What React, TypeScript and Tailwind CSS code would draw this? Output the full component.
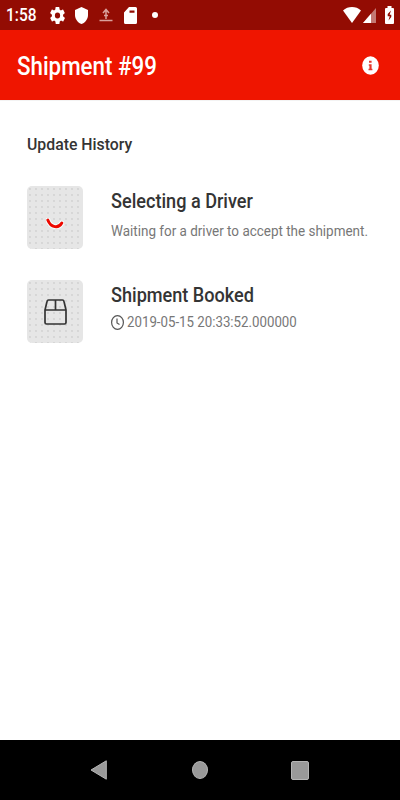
import type { ReactNode } from 'react'

interface HistoryEntry {
  title: string
  detail: string
  status: 'pending' | 'done'
}

const entries: HistoryEntry[] = [
  {
    title: 'Selecting a Driver',
    detail: 'Waiting for a driver to accept the shipment.',
    status: 'pending',
  },
  { title: 'Shipment Booked', detail: '2019-05-15 20:33:52.000000', status: 'done' },
]

function StatusBar() {
  return (
    <div className="flex h-[30px] items-center bg-[#930c03] pr-[6px] pl-[6px] text-white">
      <span className="w-[43px] text-[18px] leading-[30px] font-medium whitespace-nowrap">
        <span className="inline-block origin-left scale-x-[0.86]">1:58</span>
      </span>
      <svg className="ml-px h-[17px] w-[15px]" viewBox="2 2 20 20" preserveAspectRatio="none" fill="currentColor">
        <path d="M19.4 13a7.500 7.500 0 0 0 0-2l2.100-1.700a.5.5 0 0 0 .1-.6l-2-3.500a.5.5 0 0 0-.6-.2l-2.500 1a7.300 7.300 0 0 0-1.700-1l-.4-2.600a.5.5 0 0 0-.5-.4h-4a.5.5 0 0 0-.5.4L9.100 5a7.700 7.700 0 0 0-1.700 1l-2.500-1a.5.5 0 0 0-.6.200l-2 3.500a.5.5 0 0 0 .1.600L4.600 11a8 8 0 0 0 0 2l-2.100 1.700a.5.5 0 0 0-.1.600l2 3.500c.1.200.4.300.6.200l2.500-1c.5.400 1.100.700 1.700 1l.4 2.600c0 .2.200.4.500.4h4c.2 0 .5-.2.500-.4l.4-2.600a7.300 7.300 0 0 0 1.700-1l2.500 1c.2.100.5 0 .6-.2l2-3.500a.5.5 0 0 0-.1-.6zM12 15.500a3.500 3.500 0 1 1 0-7 3.500 3.500 0 0 1 0 7z" />
      </svg>
      <svg className="ml-[10px] h-[17px] w-[13px]" viewBox="0 0 13 17" fill="currentColor">
        <path d="M6.500 0 13 3v5c0 4-2.800 7.800-6.500 9C2.800 15.800 0 12 0 8V3z" />
      </svg>
      <svg className="ml-[11px] h-[14px] w-[14px] text-[#d9a19c]" viewBox="0 0 14 14" fill="none" stroke="currentColor" strokeWidth="1.500">
        <path d="M0.500 12.500h13M7 11V2M4 5l3-3.500L10 5M5 7.500h4" />
      </svg>
      <svg className="ml-[11px] h-[17px] w-[13px]" viewBox="0 0 13 17" fill="currentColor">
        <path fillRule="evenodd" d="M5 0h6.500A1.500 1.500 0 0 1 13 1.500v14a1.500 1.500 0 0 1-1.500 1.500h-10A1.500 1.500 0 0 1 0 15.500V5.500zM5.500 3.500v2.200h5V3.500z" />
      </svg>
      <span className="ml-[15px] h-[6px] w-[6px] rounded-full bg-white" />
      <svg className="ml-auto h-[16px] w-[18px]" viewBox="0 0 18 16" fill="currentColor">
        <path d="M0 3.500C5-1.100 13-1.100 18 3.500L9 16z" />
      </svg>
      <svg className="ml-[2px] h-[15px] w-[13px]" viewBox="0 0 13 15" fill="currentColor">
        <path d="M13 0v15H0z" opacity="0.45" />
        <path d="M8 5.800V15H0z" />
      </svg>
      <svg className="ml-[9px] h-[18px] w-[9px]" viewBox="0 0 9 18" fill="currentColor">
        <path fillRule="evenodd" d="M2.500 0h4v2H8a1 1 0 0 1 1 1v14a1 1 0 0 1-1 1H1a1 1 0 0 1-1-1V3a1 1 0 0 1 1-1h1.500zM6 4.500 2.700 8v2.300h2L3.500 14.500 6.300 11V8.700H4.600z" />
      </svg>
    </div>
  )
}

function AppBar() {
  return (
    <header className="flex h-[70px] items-center justify-between bg-[#ef1500] pr-[21px] pl-[17px] text-white">
      <h1 className="mt-[2px] origin-left scale-x-[0.893] text-[25px] leading-none font-medium whitespace-nowrap">Shipment #99</h1>
      <svg className="h-[19px] w-[17px]" viewBox="0 0 17 19" fill="currentColor">
        <ellipse cx="8.500" cy="9.500" rx="8.300" ry="9.300" />
        <path d="M7 4.800h2.600v2H7zM6.800 8.300h2.800v4.400h.8v1.500H6.500v-1.500h.9V9.800h-.6z" fill="#e5372c" />
      </svg>
    </header>
  )
}

function Tile({ children }: { children: ReactNode }) {
  return (
    <div className="flex h-[63px] w-[56px] shrink-0 items-center justify-center overflow-hidden rounded-[5px] bg-[#e6e6e6] bg-[radial-gradient(#d7d7d7_0.7px,transparent_1px)] bg-[length:6px_6px]">
      {children}
    </div>
  )
}

function HistoryRow({ entry }: { entry: HistoryEntry }) {
  const done = entry.status === 'done'

  return (
    <li className="flex h-[63px] gap-[28px]">
      <Tile>
        {done ? (
          <svg className="h-[26px] w-[23px]" viewBox="0 0 23 26" fill="none" stroke="#333333" strokeWidth="1.700" strokeLinejoin="round">
            <path d="M1 11v12.500q0 1.500 1.500 1.500h18q1.500 0 1.500-1.500V11L20 2.500q-.3-1.500-1.500-1.500h-14Q3.300 1 3 2.500zM1 11h21M11.500 1v10" />
          </svg>
        ) : (
          <svg className="mt-[12px] h-[11px] w-[18px]" viewBox="0 0 18 11" fill="none" strokeLinecap="round">
            <path d="M1.800 2c3 8 11 8.500 14 3" stroke="#f5ffff" strokeWidth="5" />
            <path d="M1.800 2c3 8 11 8.500 14 3" stroke="#ee0900" strokeWidth="2.900" />
          </svg>
        )}
      </Tile>
      <div className="min-w-0">
        <h3 className="mt-[3px] origin-left scale-x-[0.905] text-[20px] leading-[24px] font-medium whitespace-nowrap text-[#343434]">
          {entry.title}
        </h3>
        {done ? (
          <div className="mt-[5px] flex items-center gap-[3px] text-[#777777]">
            <svg className="h-[15px] w-[13px] shrink-0" viewBox="0 0 13 15" fill="none" stroke="#555555" strokeWidth="1.200">
              <ellipse cx="6.500" cy="7.500" rx="5.900" ry="6.800" />
              <path d="M6 3.500v4.500l2.500 1.500" />
            </svg>
            <span className="origin-left scale-x-[0.885] text-[15px] leading-[20px] whitespace-nowrap">{entry.detail}</span>
          </div>
        ) : (
          <p className="mt-[8px] origin-left scale-x-[0.897] text-[15px] leading-[20px] whitespace-nowrap text-[#777777]">
            {entry.detail}
          </p>
        )}
      </div>
    </li>
  )
}

function NavBar() {
  return (
    <nav className="flex h-[60px] items-center justify-between bg-black pr-[91px] pl-[90px]">
      <svg className="h-[20px] w-[17px]" viewBox="0 0 17 20">
        <path d="M16.300.8v18.400L1 10z" fill="#999999" stroke="#b5b5b5" />
      </svg>
      <span className="ml-px h-[18px] w-[16px] rounded-[50%] border border-[#b5b5b5] bg-[#999999]" />
      <span className="h-[19px] w-[18px] rounded-[2px] border border-[#b5b5b5] bg-[#999999]" />
    </nav>
  )
}

export default function App() {
  return (
    <div className="flex h-[800px] w-[400px] flex-col overflow-hidden bg-white font-['Roboto',sans-serif]">
      <StatusBar />
      <AppBar />
      <main className="flex-1 border-t border-[#f3f3f3] pl-[27px]">
        <h2 className="mt-[33px] origin-left scale-x-[0.93] text-[17px] leading-[20px] font-medium whitespace-nowrap text-[#343434]">
          Update History
        </h2>
        <ul className="mt-[32px] flex flex-col gap-[31px]">
          {entries.map((entry) => (
            <HistoryRow key={entry.title} entry={entry} />
          ))}
        </ul>
      </main>
      <NavBar />
    </div>
  )
}
